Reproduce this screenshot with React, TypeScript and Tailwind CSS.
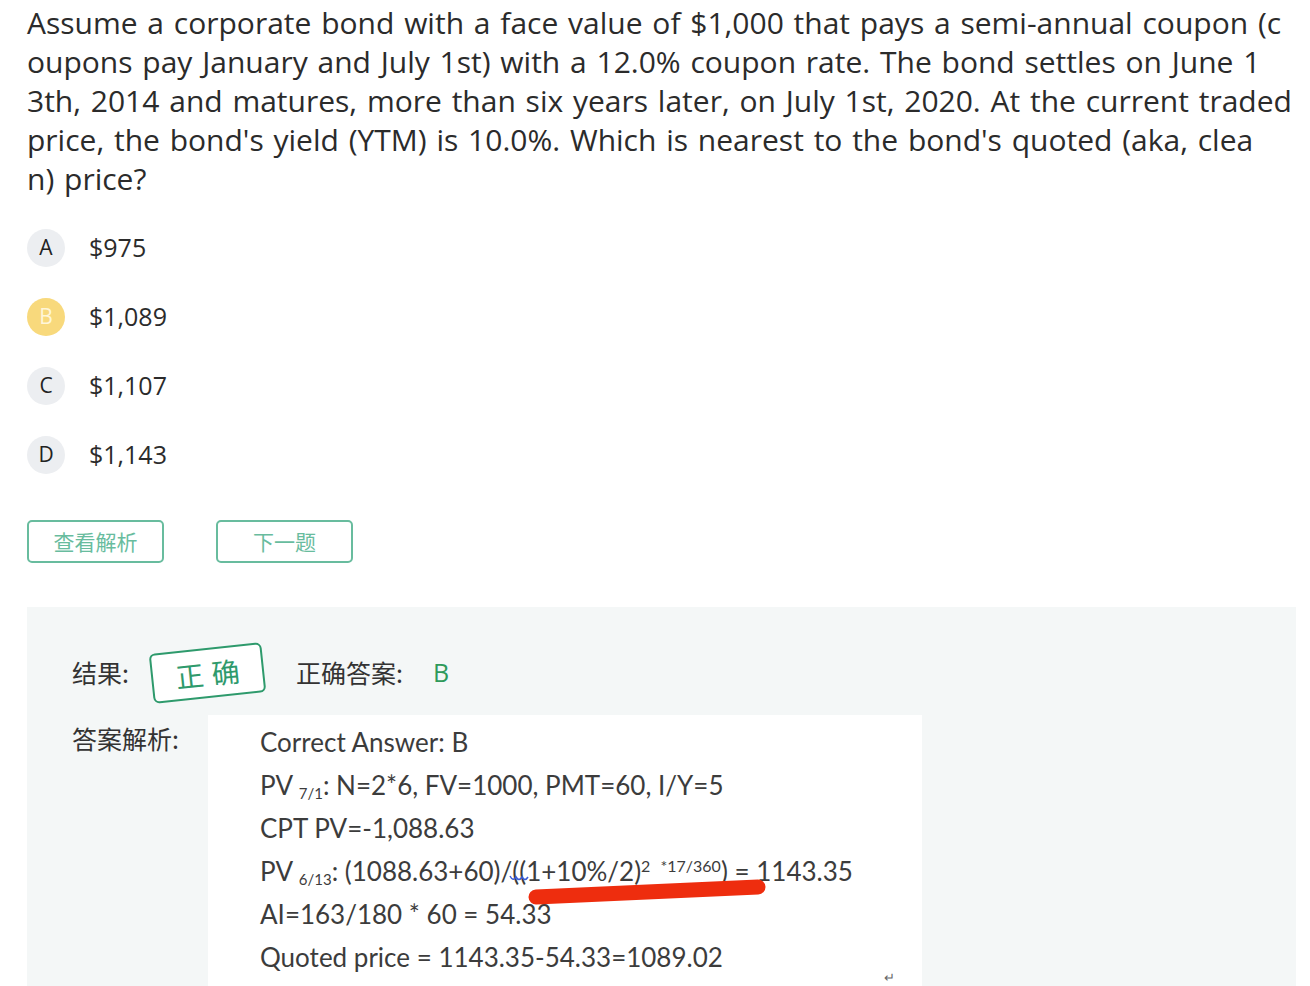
import React from "react";

const options = [
  { k: "A", v: "$975", sel: false },
  { k: "B", v: "$1,089", sel: true },
  { k: "C", v: "$1,107", sel: false },
  { k: "D", v: "$1,143", sel: false },
];

const qLines = [
  "Assume a corporate bond with a face value of $1,000 that pays a semi-annual coupon (c",
  "oupons pay January and July 1st) with a 12.0% coupon rate. The bond settles on June 1",
  "3th, 2014 and matures, more than six years later, on July 1st, 2020. At the current traded",
  "price, the bond's yield (YTM) is 10.0%. Which is nearest to the bond's quoted (aka, clea",
  "n) price?",
];

export default function App() {
  const sans = { fontFamily: '"Open Sans", "Noto Sans CJK SC", sans-serif' };
  const cjk = { fontFamily: '"Noto Sans CJK SC", "Noto Sans", sans-serif' };
  const cal = { fontFamily: 'Lato, "Noto Sans", sans-serif' };
  return (
    <div className="w-[1310px] h-[986px] overflow-hidden bg-white pl-[27px] pr-[14px]" style={sans}>
      <p className="text-[30px] leading-[39px] text-[#2b2b2b] mt-[3px] [word-spacing:2px]">
        {qLines.map((l, i) => (
          <span key={i} className="block whitespace-nowrap">
            {l}
          </span>
        ))}
      </p>

      <div className="mt-[15px] flex flex-col">
        {options.map((o) => (
          <div key={o.k} className="h-[69px] flex items-center">
            <div
              className={
                "w-[38px] h-[38px] rounded-full flex items-center justify-center text-[21px] " +
                (o.sel ? "bg-[#f8d97c] text-[#fff6d8]" : "bg-[#eceef1] text-[#222]")
              }
            >
              {o.k}
            </div>
            <span className="ml-[24px] text-[25px] text-[#2b2b2b]">{o.v}</span>
          </div>
        ))}
      </div>

      <div className="mt-[31px] flex gap-[52px]" style={cjk}>
        <button className="w-[137px] h-[43px] rounded-[5px] border-2 border-[#68bc9e] text-[#68bc9e] text-[21px] flex items-center justify-center">
          查看解析
        </button>
        <button className="w-[137px] h-[43px] rounded-[5px] border-2 border-[#68bc9e] text-[#68bc9e] text-[21px] flex items-center justify-center">
          下一题
        </button>
      </div>

      <div className="mt-[44px] bg-[#f4f7f7] h-[420px] pl-[45px] pt-[31px]" style={cjk}>
        <div className="flex items-center h-[70px]">
          <span className="text-[25px] text-[#333]">结果:</span>
          <div className="ml-[22px] w-[113px] h-[50px] border-2 border-[#2e9a6c] rounded-[6px] bg-white flex items-center justify-center rotate-[-6deg] text-[#2e9a6c] text-[28px] tracking-[8px] pl-[8px]">
            正确
          </div>
          <span className="ml-[32px] text-[25px] text-[#333]">正确答案:</span>
          <span className="ml-[30px] text-[25px] text-[#2e9a5a]" style={sans}>B</span>
        </div>

        <div className="flex mt-[7px]">
          <span className="w-[136px] text-[25px] text-[#333] leading-[46px]">答案解析:</span>
          <div className="relative w-[714px] h-[320px] bg-white pl-[52px] pt-[6px] text-[26px] text-[#3c3c3c]" style={cal}>
            <div className="h-[43px] leading-[43px]">Correct Answer: B</div>
            <div className="h-[43px] leading-[43px]">
              PV <span className="text-[15px] leading-none align-[-4px]">7/1</span>: N=2*6, FV=1000, PMT=60, I/Y=5
            </div>
            <div className="h-[43px] leading-[43px]">CPT PV=-1,088.63</div>
            <div className="h-[43px] leading-[43px] whitespace-nowrap">
              PV <span className="text-[15px] leading-none align-[-4px]">6/13</span>: (1088.63+60)/((1+10%/2)
              <span className="text-[16px] leading-none align-[9px] [word-spacing:6px]">2 *17/360</span>) = 1143.35
            </div>
            <div className="h-[43px] leading-[43px]">AI=163/180 * 60 = 54.33</div>
            <div className="h-[43px] leading-[43px]">Quoted price = 1143.35-54.33=1089.02</div>

            <svg className="absolute left-[300px] top-[157px]" width="30" height="12" viewBox="0 0 30 12">
              <path d="M2 4 Q5 10 8 5 Q11 10 14 5 Q17 10 20 5" stroke="#3b5bd6" strokeWidth="1.5" fill="none" />
            </svg>
            <svg className="absolute left-[312px] top-[160px]" width="250" height="32" viewBox="0 0 250 32">
              <path d="M16 22 Q120 17 238 12" stroke="#ee2d0e" strokeWidth="15" strokeLinecap="round" fill="none" />
            </svg>
            <span className="absolute left-[676px] top-[253px] text-[13px] text-[#666]">↵</span>
          </div>
        </div>
      </div>
    </div>
  );
}
